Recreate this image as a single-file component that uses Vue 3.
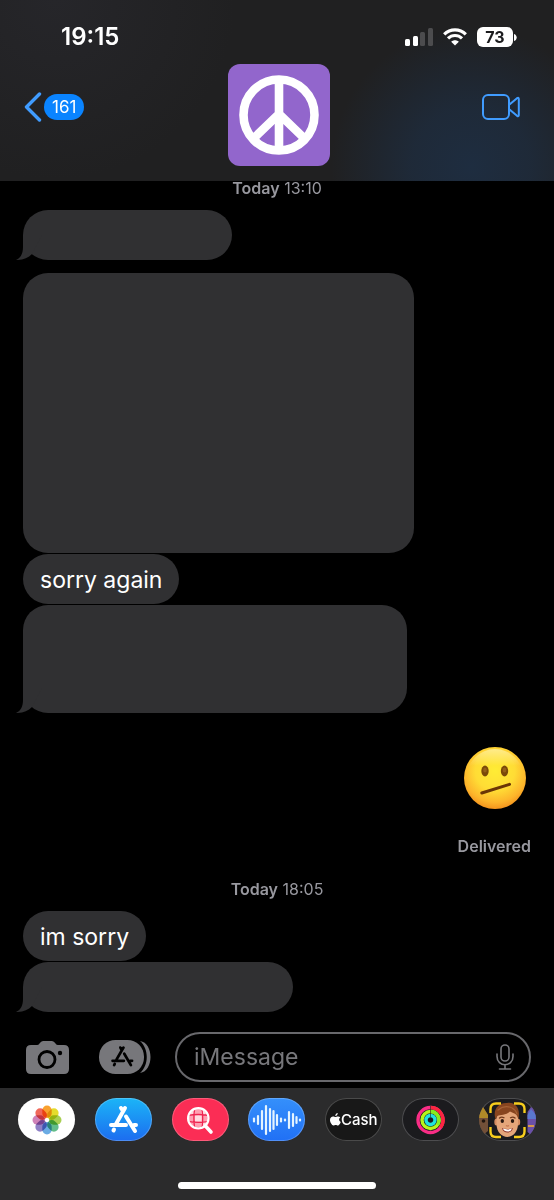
<template>
  <div class="phone">
    <header class="header">
      <div class="status">
        <span class="time">19:15</span>
        <div class="status-icons">
          <svg width="28" height="18" viewBox="0 0 28 18">
            <rect x="0" y="11" width="5" height="7" rx="1.5" fill="#fff" />
            <rect x="8" y="8" width="5" height="10" rx="1.5" fill="#fff" />
            <rect x="15" y="4" width="5" height="14" rx="1.5" fill="#4c4c4e" />
            <rect x="23" y="0" width="5" height="18" rx="1.5" fill="#4c4c4e" />
          </svg>
          <svg width="24" height="18" viewBox="0 0 24 18" fill="none" stroke="#fff" stroke-width="3.2">
            <path d="M1.2 6.4C7.2 .4 16.8 .4 22.8 6.4" />
            <path d="M5 10.4C9 6.5 15 6.5 19 10.4" />
            <path d="M12 17.6L8.2 13.7C10.4 11.7 13.6 11.7 15.8 13.7Z" fill="#fff" stroke="none" />
          </svg>
          <div class="battery">
            <span class="battery-level">73</span>
            <svg width="3" height="7" viewBox="0 0 3 7"><path d="M0 0C3.6 1 3.6 6 0 7Z" fill="#fff" /></svg>
          </div>
        </div>
      </div>
      <nav class="nav">
        <button type="button" class="back" aria-label="Back">
          <svg width="18" height="30" viewBox="0 0 18 30" fill="none" stroke="#409cff" stroke-width="3.4" stroke-linecap="round" stroke-linejoin="round">
            <path d="M15.5 2L2.5 15L15.5 28" />
          </svg>
          <span class="badge">161</span>
        </button>
        <div class="avatar">
          <svg width="80" height="80" viewBox="-40 -40 80 80" fill="none" stroke="#fff" stroke-width="8.6">
            <circle r="35.5" />
            <path d="M0 -35V35M-26 24L0 -1L26 24" />
          </svg>
        </div>
        <button type="button" class="video" aria-label="FaceTime">
          <svg width="38" height="26" viewBox="0 0 38 26" fill="none" stroke="#409cff" stroke-width="2" stroke-linejoin="round">
            <rect x="1" y="1" width="26" height="24" rx="5" />
            <path d="M27.5 10.5L35 4.2Q36.8 3 36.8 5V21Q36.8 23 35 21.8L27.5 15.5" />
          </svg>
        </button>
      </nav>
    </header>

    <main class="thread">
      <p class="stamp"><b>Today</b> 13:10</p>
      <div v-for="(group, g) in firstGroups" :key="g" class="group">
        <div
          v-for="(msg, i) in group"
          :key="i"
          class="bubble"
          :style="{ width: msg.width, height: msg.height }"
        >
          {{ msg.text }}
          <svg v-if="msg.tail" class="tail" width="26" height="25" viewBox="0 0 26 25">
            <path d="M7 0V12C7 18 5 23 0 25C7 25.2 12 23 16 19L26 0Z" fill="#303032" />
          </svg>
        </div>
      </div>
      <div class="sent">
        <svg class="emoji" width="62" height="62" viewBox="0 0 62 62" role="img" aria-label="Face with diagonal mouth">
          <defs>
            <radialGradient id="face" cx="50%" cy="38%" r="64%">
              <stop offset="0" stop-color="#ffec35" />
              <stop offset=".5" stop-color="#ffdc35" />
              <stop offset=".8" stop-color="#fdb52b" />
              <stop offset="1" stop-color="#f28d1b" />
            </radialGradient>
            <linearGradient id="shine" x1="0" y1="0" x2="0" y2="1">
              <stop offset="0" stop-color="#fff3b0" stop-opacity=".7" />
              <stop offset=".3" stop-color="#fff3b0" stop-opacity="0" />
            </linearGradient>
          </defs>
          <circle cx="31" cy="31" r="31" fill="url(#face)" />
          <circle cx="31" cy="30" r="28" fill="url(#shine)" />
          <ellipse cx="21" cy="24" rx="3.7" ry="5.4" fill="#7a4a08" />
          <ellipse cx="40.5" cy="24" rx="3.7" ry="5.4" fill="#7a4a08" />
          <ellipse cx="21" cy="23" rx="1.8" ry="2.6" fill="#94601a" />
          <ellipse cx="40.5" cy="23" rx="1.8" ry="2.6" fill="#94601a" />
          <path d="M17.8 46L45.5 37.4" stroke="#6b3606" stroke-width="3" stroke-linecap="round" />
        </svg>
        <span class="receipt">Delivered</span>
      </div>
      <p class="stamp"><b>Today</b> 18:05</p>
      <div class="group last">
        <div
          v-for="(msg, i) in lastGroup"
          :key="i"
          class="bubble"
          :style="{ width: msg.width, height: msg.height }"
        >
          {{ msg.text }}
          <svg v-if="msg.tail" class="tail" width="26" height="25" viewBox="0 0 26 25">
            <path d="M7 0V12C7 18 5 23 0 25C7 25.2 12 23 16 19L26 0Z" fill="#303032" />
          </svg>
        </div>
      </div>
    </main>

    <form class="composer" @submit.prevent="send">
      <button type="button" aria-label="Camera">
        <svg width="43" height="33" viewBox="0 0 43 33">
          <path d="M5 4H11Q12.5 4 13.5 2.5Q15 0 17 0H26Q28 0 29.5 2.5Q30.5 4 32 4H38Q43 4 43 9V28Q43 33 38 33H5Q0 33 0 28V9Q0 4 5 4Z" fill="#77777b" />
          <circle cx="21" cy="18.5" r="8" fill="none" stroke="#000" stroke-width="2.8" />
          <circle cx="34" cy="12" r="2.2" fill="#000" />
        </svg>
      </button>
      <button type="button" class="apps-toggle" aria-label="Apps">
        <svg width="52" height="34" viewBox="0 0 52 34">
          <path d="M41 1C55 3 55 31 41 33C50 25 50 9 41 1Z" fill="#77777b" />
          <rect width="45" height="34" rx="16.5" fill="#77777b" />
          <g transform="translate(12 6) scale(.78)" fill="none" stroke="#000" stroke-width="3.5" stroke-linecap="round">
            <path d="M16 2L7 17.5M4.8 23L4 24.5M2 19H16.5M24.5 19H27M12 2L13 3.8M17 10L25.5 24.5" />
          </g>
        </svg>
      </button>
      <div class="field">
        <input v-model="draft" type="text" placeholder="iMessage" aria-label="iMessage" />
        <button type="button" aria-label="Dictate">
          <svg width="18" height="26" viewBox="0 0 18 26" fill="none" stroke="#77777b" stroke-width="1.6" stroke-linecap="round">
            <rect x="5" y="1" width="8" height="16" rx="4" />
            <path d="M1 10V12.5C1 23.5 17 23.5 17 12.5V10M9 21V25M3.5 25H14.5" />
          </svg>
        </button>
      </div>
    </form>

    <footer class="drawer">
      <div class="apps">
        <button type="button" class="app photos" aria-label="Photos">
          <svg viewBox="0 0 57 42">
            <g transform="translate(29 21)">
              <rect
                v-for="(color, i) in petals"
                :key="color"
                class="petal"
                x="-4.7"
                y="-14.5"
                width="9.4"
                height="12.5"
                rx="4.7"
                :fill="color"
                :transform="`rotate(${i * 45})`"
              />
            </g>
          </svg>
        </button>
        <button type="button" class="app store" aria-label="App Store">
          <svg viewBox="0 0 57 42">
            <g transform="translate(14 7)" fill="none" stroke="#fff" stroke-width="4" stroke-linecap="round">
              <path d="M16 2L7 18M5 23.5L4.5 24.5M2 19H17M25 19H27M12 2L14 5M17 10.5L26 25" />
            </g>
          </svg>
        </button>
        <button type="button" class="app images" aria-label="#images">
          <svg viewBox="0 0 57 42">
            <clipPath id="lens"><circle cx="26.3" cy="19.3" r="9.4" /></clipPath>
            <g clip-path="url(#lens)">
              <rect x="16" y="9" width="21" height="21" fill="#ff9fb1" />
              <path d="M23 16H29.6V22.4H23ZM16 9H23V16H16ZM29.6 22.4H37V30H29.6ZM29.6 9H33.5V16H29.6Z" fill="#ffdbe1" />
              <path d="M22.8 9Q21 19 22.8 30M29.8 9Q31.6 19 29.8 30M16 16.4Q26 14.600 37 16.400M16 22.400Q26 24.200 37 22.400" fill="none" stroke="#ee2450" stroke-width="1.3" />
            </g>
            <circle cx="26.3" cy="19.3" r="10.2" fill="none" stroke="#fff" stroke-width="2.2" />
            <path d="M33.500 27L39 33" stroke="#fff" stroke-width="3.6" stroke-linecap="round" />
          </svg>
        </button>
        <button type="button" class="app music" aria-label="Music">
          <svg viewBox="0 0 57 42">
            <line
              v-for="bar in wave"
              :key="bar[0]"
              :x1="bar[0]"
              :x2="bar[0]"
              :y1="21 - bar[1]"
              :y2="21 + bar[1]"
              stroke="#e4f4ff"
              stroke-width="2.2"
              stroke-linecap="round"
            />
          </svg>
        </button>
        <button type="button" class="app cash" aria-label="Apple Cash">
          <svg class="apple" width="11" height="13" viewBox="0 0 22 26">
            <path d="M15.5 0C15.7 3 13.2 6.2 10.6 6C10.3 3.2 12.8 .4 15.5 0ZM20.5 9C17 11.2 17.4 16.2 21.5 18C20.5 21 18.2 25 15.8 25C14 25 13.5 24 11.4 24C9.2 24 8.6 25 7 25C3.8 25 0 19 0 14.2C0 9.4 3 6.8 6.2 6.8C8.2 6.8 9.8 8 11 8C12.2 8 14 6.6 16.4 6.8C18 6.9 19.6 7.6 20.5 9Z" fill="#fff" />
          </svg>
          <span>Cash</span>
        </button>
        <button type="button" class="app fitness" aria-label="Fitness">
          <svg viewBox="0 0 57 42" fill="none">
            <g transform="translate(28.5 21)" stroke-width="3.4">
              <circle r="12.5" stroke="#f92d86" />
              <path d="M0 -12.5A12.5 12.5 0 0 1 10 7.5" stroke="#fb2640" />
              <circle r="8.5" stroke="#b5f51c" />
              <path d="M0 -8.5A8.5 8.5 0 0 1 7 4.8" stroke="#86ee20" />
              <circle r="4.5" stroke="#21e3dd" />
              <path d="M0 -14.2V-3" stroke="#222" stroke-width=".6" />
            </g>
          </svg>
        </button>
        <button type="button" class="app memoji" aria-label="Memoji">
          <svg viewBox="0 0 57 42">
            <path d="M0 16L4 8L9 16V32L4 36L0 31Z" fill="#735038" />
            <path d="M0 16L4 8L9 16V19H0Z" fill="#b08a28" />
            <circle cx="4.5" cy="22" r="1.8" fill="#211610" />
            <path d="M57 12L52 8L48.5 13V33L52 36L57 31Z" fill="#6a50a8" />
            <path d="M48.5 16L52 10L57 16V20H48.5Z" fill="#5a78ce" />
            <path d="M49 27H55" stroke="#d59a4a" stroke-width="2" />
            <ellipse cx="17.5" cy="23" rx="2.2" ry="3.6" fill="#d48c62" />
            <ellipse cx="39" cy="23" rx="2.2" ry="3.6" fill="#d48c62" />
            <path d="M17.5 17Q18 10 28.5 10Q38.5 10 39 17V25C39 33 33.5 38 28.3 38C23 38 17.5 33 17.5 25Z" fill="#e5a67a" />
            <path d="M16.5 20C13.5 11 19 3.5 28 4C35 2.5 42 8 39.5 20L37.5 16C35.5 14 33 13.5 31 12.5C27 16.5 21 15.5 18.5 17Z" fill="#88451f" />
            <path d="M19 11Q25 6 32 8.5M33 9Q37 11 38 15" fill="none" stroke="#a66236" stroke-width="1.2" stroke-linecap="round" />
            <path d="M20.5 19Q22.5 17.3 25 18.7M31.5 18.7Q34 17.3 36 19" fill="none" stroke="#713a1d" stroke-width="1.3" stroke-linecap="round" />
            <ellipse cx="23.3" cy="22" rx="1.7" ry="1.9" fill="#2b1a12" />
            <ellipse cx="33.5" cy="22" rx="1.7" ry="1.9" fill="#2b1a12" />
            <path d="M27 26.500Q28.5 27.6 30 26.5" fill="none" stroke="#c67650" stroke-width="1.2" />
            <path d="M23 29Q28.5 31 34 29C33 35 24 35 23 29Z" fill="#8e3329" />
            <path d="M23.8 29.6Q28.5 31.2 33.2 29.6Q32 32.6 28.5 32.6T23.8 29.6Z" fill="#fff" />
            <path d="M11.5 14V10Q11.5 4.5 17 4.5H22M35 4.5H40Q45.5 4.5 45.5 10V14M45.5 28V32.5Q45.5 38 40 38H35M22 38H17Q11.5 38 11.5 32.5V28" fill="none" stroke="#f7cd1d" stroke-width="2.4" />
          </svg>
        </button>
      </div>
      <div class="home-bar"></div>
    </footer>
  </div>
</template>

<script setup>
import { ref } from 'vue';

const draft = ref('');

// messages without text are empty bubbles with a fixed size
const firstGroups = [
  [{ text: '', width: '209px', height: '50px', tail: true }],
  [
    { text: '', width: '391px', height: '280px' },
    { text: 'sorry again' },
    { text: '', width: '384px', height: '108px', tail: true },
  ],
];

const lastGroup = [
  { text: 'im sorry' },
  { text: '', width: '270px', height: '50px', tail: true },
];

const petals = ['#f9a12e', '#e5dc2c', '#a8cf52', '#62bd8a', '#6bace4', '#8f80c6', '#cf82b8', '#f0685a'];

// [x, half height]
const wave = [
  [6, 1.5], [10, 4], [14, 9], [18, 14], [22, 11], [25.5, 9], [29, 5],
  [33, 1.5], [37, 0.5], [41, 8], [45, 6], [48.5, 3], [52, 0.5],
];

const send = () => {
  draft.value = '';
};
</script>

<style>
body {
  margin: 0;
  background: #000;
}
</style>

<style scoped>
.phone {
  display: flex;
  flex-direction: column;
  min-height: 100vh;
  background: #000;
  color: #fff;
  font-family: Inter, "Liberation Sans", sans-serif;
}
button {
  display: flex;
  align-items: center;
  justify-content: center;
  padding: 0;
  border: none;
  background: none;
  color: inherit;
  font-family: inherit;
  cursor: pointer;
}
svg {
  display: block;
  flex: none;
}
.header {
  background:
    radial-gradient(circle at 85% 92%, #1e2d40 0, rgba(30, 45, 64, 0.75) 60px, rgba(30, 45, 64, 0) 140px),
    radial-gradient(circle at 10% 0, #26262a 0, #202021 180px);
}
.status {
  display: flex;
  align-items: center;
  justify-content: space-between;
  height: 54px;
  padding: 10px 37px 0 61px;
}
.time {
  font-size: 24px;
  font-weight: 600;
  line-height: 28px;
}
.status-icons {
  display: flex;
  align-items: center;
  gap: 10px;
}
.battery {
  display: flex;
  align-items: center;
  gap: 1px;
}
.battery-level {
  width: 36px;
  border-radius: 6px;
  background: #fff;
  color: #1c1c1e;
  font-size: 16px;
  font-weight: 700;
  line-height: 20px;
  text-align: center;
}
.nav {
  display: grid;
  grid-template-columns: 1fr auto 1fr;
  align-items: start;
  padding: 0 20px 15px 24px;
}
.back {
  gap: 2px;
  margin-top: 28px;
  justify-self: start;
}
.badge {
  padding: 0 8px;
  border-radius: 13px;
  background: #0a84ff;
  font-size: 17px;
  line-height: 26px;
}
.avatar {
  display: flex;
  align-items: center;
  justify-content: center;
  width: 102px;
  height: 102px;
  border-radius: 12px;
  background: #9266cc;
}
.video {
  margin: 30px 14px 0 0;
  justify-self: end;
}
.thread {
  display: flex;
  flex: 1;
  flex-direction: column;
  padding: 0 23px;
}
.stamp {
  margin: 0 0 15px;
  color: #98989f;
  font-size: 16px;
  line-height: 14px;
  text-align: center;
}
.stamp b {
  font-weight: 600;
}
.group {
  display: flex;
  flex-direction: column;
  align-items: flex-start;
  gap: 1px;
  margin-bottom: 13px;
}
.group.last {
  margin-bottom: 0;
}
.bubble {
  position: relative;
  box-sizing: border-box;
  max-width: 100%;
  min-height: 50px;
  padding: 11px 17px 9px;
  border-radius: 25px;
  background: #303032;
  font-size: 23px;
  line-height: 30px;
}
.tail {
  position: absolute;
  bottom: 0;
  left: -7px;
}
.sent {
  display: flex;
  flex-direction: column;
  align-items: flex-end;
  gap: 29px;
  margin: 21px 0 28px;
}
.emoji {
  margin-right: 5px;
}
.receipt {
  color: #98989f;
  font-size: 16px;
  font-weight: 600;
  line-height: 16px;
}
.composer {
  display: flex;
  align-items: center;
  padding: 20px 23px 6px 26px;
}
.apps-toggle {
  margin: 0 24px 0 30px;
}
.field {
  display: flex;
  flex: 1;
  align-items: center;
  box-sizing: border-box;
  min-width: 0;
  height: 50px;
  padding: 0 15px 0 17px;
  border: 2px solid #68686c;
  border-radius: 25px;
}
.field input {
  flex: 1;
  min-width: 0;
  padding: 0;
  border: none;
  outline: none;
  background: none;
  color: #fff;
  font-family: inherit;
  font-size: 23px;
}
.field input::placeholder {
  color: #77777b;
  opacity: 1;
}
.drawer {
  padding: 10px 18px 11px;
  background: #2b2b2c;
}
.apps {
  display: flex;
  justify-content: space-between;
}
.app {
  box-sizing: border-box;
  width: 57px;
  height: 43px;
  border-radius: 22px;
  overflow: hidden;
  box-shadow: inset 0 0 0 1px rgba(255, 255, 255, 0.22);
}
.app svg:not(.apple) {
  width: 57px;
  height: 42px;
}
.photos {
  background: #fff;
}
.petal {
  mix-blend-mode: multiply;
}
.store {
  background: linear-gradient(#1bb5f7, #1c6cf0);
}
.images {
  background: #fb2d55;
}
.music {
  background: linear-gradient(#3590fb, #2070f5);
}
.cash {
  background: #181818;
  font-size: 15px;
  font-weight: 500;
}
.fitness,
.memoji {
  background: #1b1b1e;
}
.home-bar {
  width: 198px;
  height: 7px;
  margin: 41px auto 0;
  border-radius: 4px;
  background: #fff;
}
</style>
